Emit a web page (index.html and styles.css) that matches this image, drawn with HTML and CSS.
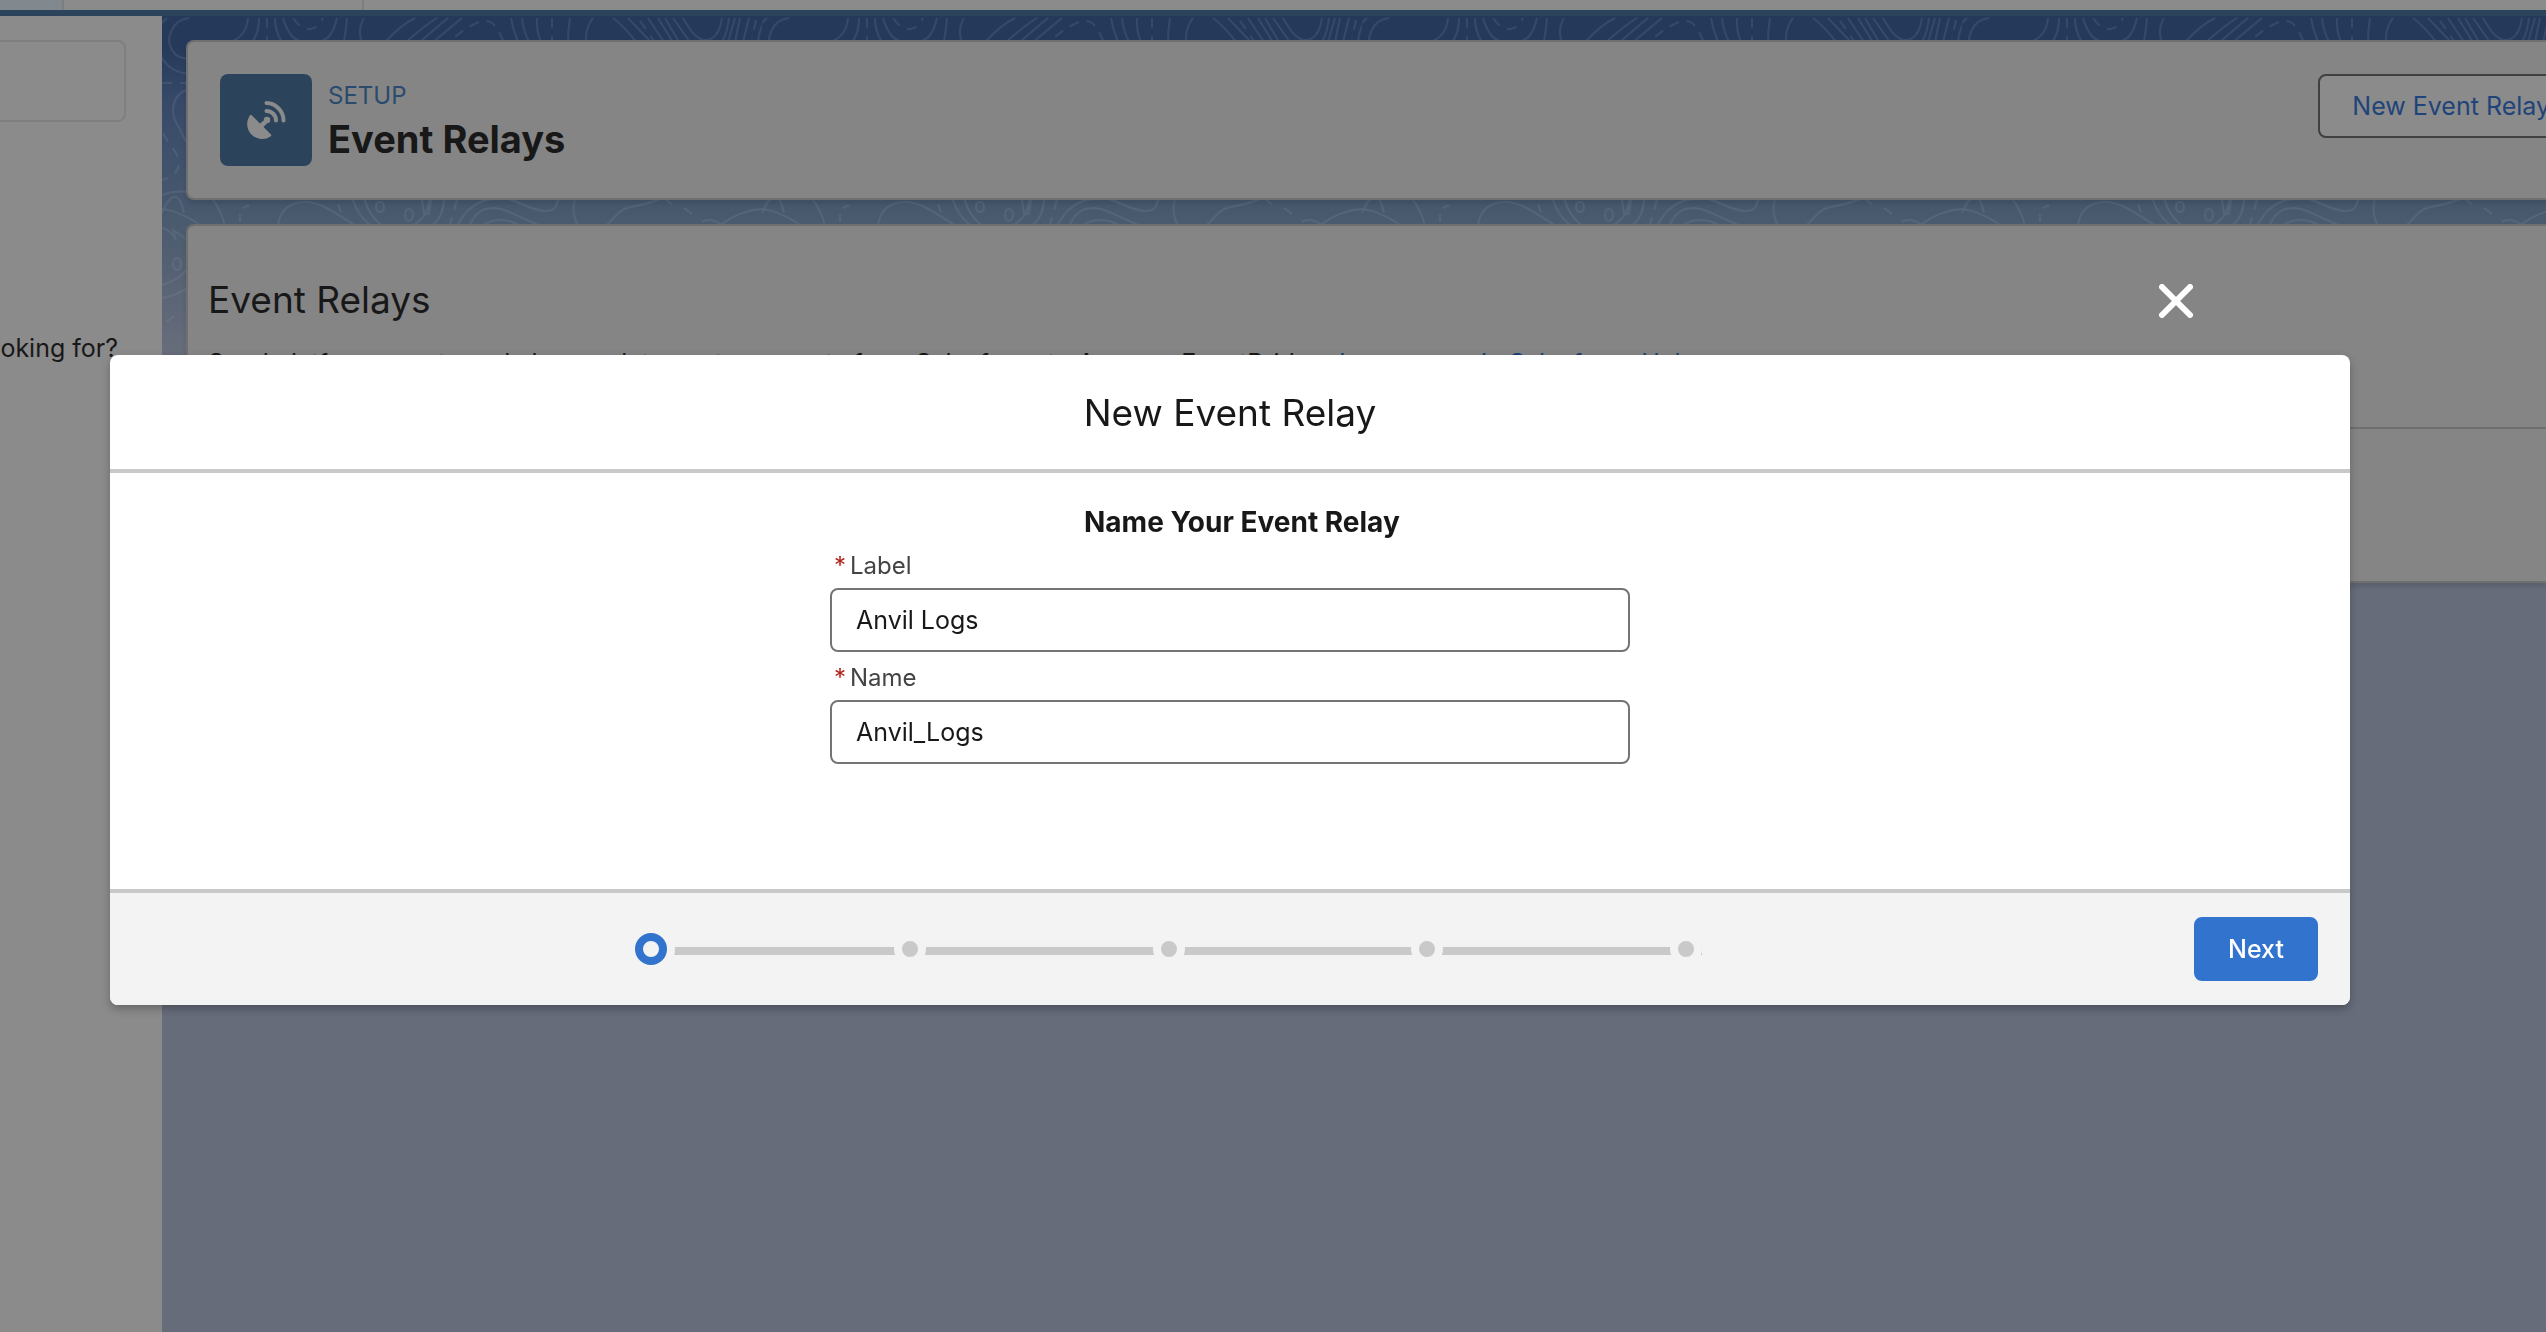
FILE: index.html
```html
<!DOCTYPE html>
<html lang="en">
<head>
<meta charset="utf-8">
<title>Event Relays | Setup</title>
<link rel="stylesheet" href="styles.css">
</head>
<body>
<div class="app">
  <nav class="tabs" aria-label="Setup tabs"><span class="tab tab-home"></span><span class="tab tab-objects"></span></nav>
  <div class="columns">
    <aside class="sidebar">
      <div class="search-box"></div>
      <p class="hint">oking for?</p>
    </aside>
    <main class="main">
      <svg class="contours" aria-hidden="true">
        <defs>
          <pattern id="topo" width="600" height="344" patternUnits="userSpaceOnUse">
            <g class="lines">
              <path d="M0 7L5 2M27 2C10 4 4 22 9 32S20 42 26 43M0 42C6 52 14 56 26 58M26 73C8 80 9 98 15 108S22 124 26 128M0 179C8 176 18 175 28 176M0 197C5 186 8 181 13 181S20 189 22 197M0 193C12 194 24 200 37 208M0 212C8 214 10 218 14 224L11 214C18 218 22 222 28 226M0 269C12 265 22 260 28 248M0 282C12 280 22 276 30 268"/>
              <ellipse cx="15" cy="248" rx="4" ry="6"/>
              <path d="M86 2C85 14 80 22 68 26M97 2C97 12 95 20 90 26M113 2C113 14 116 20 120 26M121 2C126 18 132 27 148 27S171 20 175 2M185 2Q184 14 182 26M202 2Q195 14 200 26M253 2Q240 8 223 26M275 2Q262 10 244 26M286 2Q274 12 258 26M300 2L271 26M349 2Q351 14 356 26M360 2Q361 14 367 26M375 2Q374 14 379 26M408 2Q406 14 406 26M431 2Q423 12 424 26M451 2Q462 10 474 26M466 2L489 26M486 2L502 26M496 2L511 26M503 2L517 26M511 2L528 26M521 2C530 18 536 24 544 24S558 16 560 2M567 2Q566 14 560 26M573 2L566 26M578 2L573 26M587 2L581 26M605 2Q597 12 596 26"/>
              <path d="M51 184Q59 194 63 210M116 210C118 192 130 186 144 186S172 196 194 210M190 182Q196 200 209 210M202 182Q208 202 221 210M267 182Q268 200 250 210M260 184L262 198L267 198L269 184M282 182Q282 200 270 210M295 210C304 192 316 184 332 183M307 210C314 196 320 192 332 192S358 202 379 210M320 210C330 202 346 202 358 210M344 182C358 186 370 195 383 195S394 188 397 182M413 182Q409 196 416 210M444 210C454 200 458 193 468 191S488 188 500 182M540 206Q547 201 559 208M557 210C570 200 584 194 600 193M605 182L601 193"/>
              <ellipse cx="218" cy="191" rx="4" ry="5"/>
              <ellipse cx="247" cy="199" rx="4" ry="6"/>
            </g>
            <g class="lines dashed">
              <path d="M105 2V26M131 2C136 10 142 13 148 13S158 8 161 2M293 21C306 10 316 5 324 5S336 14 342 26M390 2V26M478 5L492 25M594 4L590 22M0 67H24M1 117C6 128 18 138 17 148S8 162 0 164M87 189L81 192M78 198V206M176 188L179 196M295 184L288 208M504 184L510 188M522 192L530 198M4 306L14 299"/>
            </g>
          </pattern>
        </defs>
        <rect width="100%" height="100%" fill="url(#topo)"/>
      </svg>
      <header class="card page-header">
        <span class="page-icon">
          <svg viewBox="0 0 92 92" aria-hidden="true">
            <path class="solid" d="M32 41.500L40 49.500L43.500 46.500L47 49.500L43.500 53L51 60.500Q52 61.500 50.500 62.500A15 15 0 0 1 29.500 42Q30.500 40 32 41.500Z"/>
            <circle class="solid" cx="47" cy="46" r="3.200"/>
            <path class="wave" d="M46.500 37A9.500 9.500 0 0 1 56 46.500M46.500 29A17.500 17.500 0 0 1 63.500 46.500"/>
          </svg>
        </span>
        <div class="page-titles">
          <p class="eyebrow">SETUP</p>
          <h1>Event Relays</h1>
        </div>
        <button class="new-button" type="button">New Event Relay</button>
      </header>
      <section class="card list-card">
        <div class="list-intro">
          <h2>Event Relays</h2>
          <p>Send platform events and change data capture events from Salesforce to Amazon EventBridge. <a href="#">Learn more in Salesforce Help</a></p>
        </div>
        <div class="list-body"></div>
      </section>
    </main>
  </div>
</div>

<div class="overlay">
  <div class="dialog-wrap">
    <button class="close" type="button" aria-label="Close">
      <svg viewBox="0 0 34 34" aria-hidden="true"><path d="M3 3L31 31M31 3L3 31"/></svg>
    </button>
    <form class="dialog" role="dialog" aria-labelledby="dialog-title">
      <header class="dialog-header"><h2 id="dialog-title">New Event Relay</h2></header>
      <div class="dialog-body">
        <h3>Name Your Event Relay</h3>
        <div class="fields">
          <label for="relay-label"><span class="required">*</span>Label</label>
          <input id="relay-label" type="text" value="Anvil Logs">
          <label for="relay-name"><span class="required">*</span>Name</label>
          <input id="relay-name" type="text" value="Anvil_Logs">
        </div>
      </div>
      <footer class="dialog-footer">
        <ol class="steps" aria-label="Progress">
          <li class="current"></li><li></li><li></li><li></li><li></li>
        </ol>
        <button class="next" type="button">Next</button>
      </footer>
    </form>
  </div>
</div>
</body>
</html>
```
FILE: styles.css
```css
* { box-sizing: border-box; }
body {
  margin: 0;
  overflow: hidden;
  font-family: Inter, "Liberation Sans", sans-serif;
  font-size: 25px;
  line-height: 40px;
  color: #181818;
  background: #666c7a;
}
h1, h2, h3, p, ol { margin: 0; padding: 0; }
button, input { font: inherit; }

/* Page behind the dialog */
.app { display: flex; flex-direction: column; min-height: 100vh; }
.tabs {
  display: flex;
  height: 16px;
  background: #8b8b8b;
  border-bottom: 6px solid #2c445b;
}
.tab { border-right: 2px solid #7d7d7d; }
.tab-home { width: 64px; background: #82898e; }
.tab-objects { width: 300px; }
.columns { display: flex; flex: 1; }
.sidebar { flex: none; width: 162px; padding-top: 24px; background: #8b8b8b; }
.search-box {
  height: 82px;
  margin-right: 36px;
  border: 2px solid #7f7f7f;
  border-left: 0;
  border-radius: 0 8px 8px 0;
}
.hint { margin: 206px 44px 0 0; text-align: right; white-space: nowrap; }

.main {
  position: relative;
  flex: 1;
  min-width: 0;
  padding: 24px 0 0 24px;
  background: linear-gradient(#25395a 0, #25395a 30px, #364968 84px, #48596e 196px, #666c7a 330px) no-repeat;
}
.contours { position: absolute; inset: 0 0 auto 0; width: 100%; height: 344px; }
.lines { fill: none; stroke: #8f9bad; stroke-opacity: 0.17; stroke-width: 2; }
.dashed { stroke-dasharray: 10 8; }
.card {
  position: relative;
  border: 2px solid #6f6f6f;
  border-right: 0;
  border-radius: 8px 0 0 8px;
  background: #858585;
  box-shadow: 0 4px 4px rgba(0, 0, 0, 0.1);
}
.page-header {
  display: flex;
  align-items: flex-start;
  height: 160px;
  padding: 32px 0 0 32px;
  overflow: hidden;
}
.page-icon { width: 92px; height: 92px; border-radius: 8px; background: #2c445b; }
.page-icon svg { display: block; }
.solid { fill: #8b8b8b; }
.wave { fill: none; stroke: #8b8b8b; stroke-width: 4; stroke-linecap: round; }
.page-titles { flex: 1; padding: 4px 16px; }
.eyebrow { font-size: 24px; line-height: 36px; color: #2a4a6e; }
h1 { font-size: 38px; line-height: 50px; font-weight: 700; }
.new-button {
  flex: none;
  height: 64px;
  margin-right: -38px;
  padding: 0 32px;
  border: 2px solid #404040;
  border-radius: 8px;
  background: #8b8b8b;
  color: #1f447a;
  white-space: nowrap;
}
.list-card { margin-top: 24px; }
.list-intro { padding: 48px 20px 44px; border-bottom: 2px solid #6f6f6f; }
.list-intro h2 { font-size: 37px; line-height: 52px; font-weight: 400; }
.list-intro p { margin-top: 17px; }
.list-intro a { color: #1f3f74; text-decoration: none; }
.list-body { height: 152px; }

/* Dialog */
.overlay { position: fixed; inset: 0; padding: 276px 196px 0 110px; }
.dialog-wrap { display: flex; flex-direction: column; }
.close {
  align-self: flex-end;
  width: 50px;
  height: 50px;
  margin: 0 149px 29px 0;
  padding: 8px;
  border: 0;
  background: none;
}
.close svg { display: block; fill: none; stroke: #fff; stroke-width: 6; stroke-linecap: round; }
.dialog {
  border-radius: 8px;
  overflow: hidden;
  background: #fff;
  box-shadow: 0 4px 8px rgba(0, 0, 0, 0.25);
}
.dialog-header { padding: 32px 32px 30px; border-bottom: 4px solid #c9c9c9; text-align: center; }
.dialog-header h2 { font-size: 37px; line-height: 52px; font-weight: 400; }
.dialog-body {
  display: flex;
  flex-direction: column;
  align-items: center;
  height: 416px;
  padding: 31px 32px;
}
h3 { width: 292px; font-size: 28px; line-height: 36px; font-weight: 700; white-space: nowrap; }
.fields { display: grid; width: 800px; }
.fields label { padding: 8px 4px 0; font-size: 24px; line-height: 36px; color: #444; }
.required { margin-right: 4px; color: #b3261e; }
.fields input {
  width: 100%;
  height: 64px;
  margin-top: 4px;
  padding: 0 24px;
  border: 2px solid #747474;
  border-radius: 8px;
  background: #fff;
  color: #181818;
}
.dialog-footer {
  display: flex;
  justify-content: flex-end;
  align-items: center;
  padding: 24px 32px;
  border-top: 4px solid #c9c9c9;
  background: #f3f3f3;
}
.steps {
  display: flex;
  justify-content: space-between;
  align-items: center;
  width: 1067px;
  margin-right: 492px;
  list-style: none;
  background: linear-gradient(#c9c9c9, #c9c9c9) 0 14px / 100% 8px no-repeat;
}
.steps li {
  width: 32px;
  height: 32px;
  border: 8px solid #f3f3f3;
  border-radius: 50%;
  background: #c9c9c9;
}
.steps .current {
  border-color: #3273cd;
  background: #f3f3f3;
  box-shadow: 0 0 0 8px #f3f3f3;
}
.next {
  height: 64px;
  padding: 0 32px;
  border: 2px solid #3273cd;
  border-radius: 8px;
  background: #3273cd;
  color: #fff;
  font-weight: 500;
}
```
